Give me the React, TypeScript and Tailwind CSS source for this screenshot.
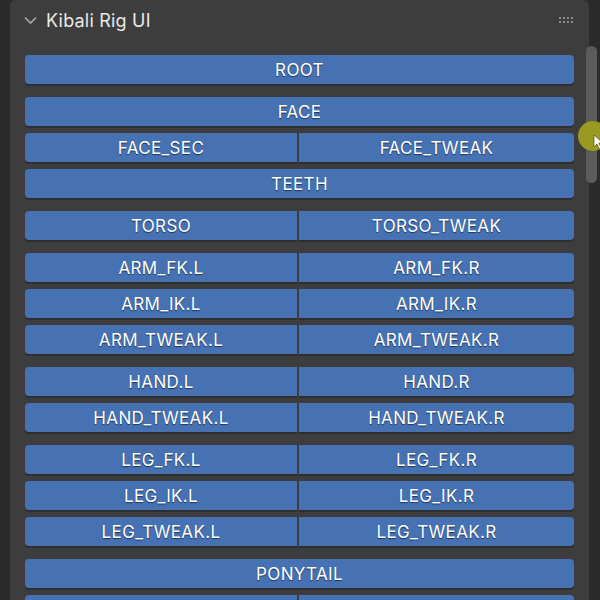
import React from "react"

type Row = string[]

const groups: Row[][] = [
    [["ROOT"]],
    [["FACE"], ["FACE_SEC", "FACE_TWEAK"], ["TEETH"]],
    [["TORSO", "TORSO_TWEAK"]],
    [
        ["ARM_FK.L", "ARM_FK.R"],
        ["ARM_IK.L", "ARM_IK.R"],
        ["ARM_TWEAK.L", "ARM_TWEAK.R"],
    ],
    [
        ["HAND.L", "HAND.R"],
        ["HAND_TWEAK.L", "HAND_TWEAK.R"],
    ],
    [
        ["LEG_FK.L", "LEG_FK.R"],
        ["LEG_IK.L", "LEG_IK.R"],
        ["LEG_TWEAK.L", "LEG_TWEAK.R"],
    ],
    // last row is cut off by the window, labels not visible
    [["PONYTAIL"], ["", ""]],
]

const btn =
    "h-[29px] flex items-center justify-center pt-[2px] bg-[#4672b4] text-white text-[17px] tracking-[0.35px] leading-none shadow-[0_2px_0_#2e2e2e] [text-shadow:0_1px_1px_rgba(0,0,0,0.55)]"

function ButtonRow({ row }: { row: Row }) {
    if (row.length === 1) {
        return <div className={`${btn} rounded-[4px]`}>{row[0]}</div>
    }
    return (
        <div className="flex gap-[2px]">
            <div className={`${btn} w-[272px] rounded-l-[4px]`}>{row[0]}</div>
            <div className={`${btn} flex-1 rounded-r-[4px]`}>{row[1]}</div>
        </div>
    )
}

export default function App() {
    return (
        <div className="w-[600px] h-[600px] bg-[#2b2b2b] overflow-hidden relative font-['Inter','Noto_Sans',sans-serif]">
            <div className="ml-[10px] w-[579px] h-full bg-[#3d3d3d] rounded-t-[6px]">
                {/* header */}
                <div className="h-[40px] flex items-center pl-[14px] pr-[16px]">
                    <svg width="13" height="9" viewBox="0 0 13 9" className="mt-[1px]">
                        <path d="M1 1.5 L6.5 7 L12 1.5" fill="none" stroke="#a9a9a9" strokeWidth="1.6" />
                    </svg>
                    <span className="ml-[9px] mt-[1px] text-[18px] tracking-[0.2px] text-[#e8e8e8]">Kibali Rig UI</span>
                    <div className="ml-auto grid grid-cols-4 gap-x-[2px] gap-y-[2px]">
                        {Array.from({ length: 8 }).map((_, i) => (
                            <div key={i} className="w-[2px] h-[2px] bg-[#8c8c8c]" />
                        ))}
                    </div>
                </div>

                {/* buttons */}
                <div className="px-[15px] pt-[15px] flex flex-col gap-[13px]">
                    {groups.map((g, gi) => (
                        <div key={gi} className="flex flex-col gap-[7px]">
                            {g.map((row, ri) => (
                                <ButtonRow key={ri} row={row} />
                            ))}
                        </div>
                    ))}
                </div>
            </div>

            {/* scrollbar */}
            <div className="absolute left-[586px] top-[46px] w-[11px] h-[137px] rounded-full bg-[#5b5b5b]" />

            {/* cursor highlight */}
            <div className="absolute left-[578px] top-[121px] w-[30px] h-[30px] rounded-full bg-[#9a9a22]" />
            <svg className="absolute left-[593px] top-[134px]" width="10" height="16" viewBox="0 0 10 16">
                <path d="M1 1 L1 13 L4 10 L6 15 L8 14 L6 9 L10 9 Z" fill="#fffbe8" stroke="#3a3a10" strokeWidth="0.6" />
            </svg>
        </div>
    )
}
